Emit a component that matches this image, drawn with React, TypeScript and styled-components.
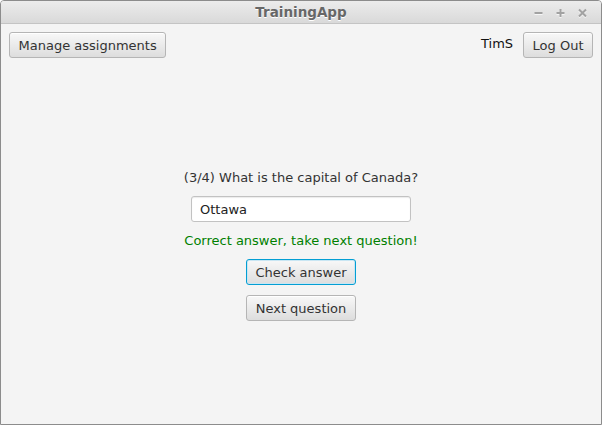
import React from "react";
import styled, { createGlobalStyle } from "styled-components";

const Global = createGlobalStyle`
  html, body { margin: 0; padding: 0; background: #ffffff; }
  body { font-family: "DejaVu Sans", "Liberation Sans", sans-serif; }
  * { box-sizing: border-box; }
`;

const Window = styled.div`
  width: 602px;
  height: 425px;
  border: 1px solid #8c8c8c;
  border-radius: 4px 4px 0 0;
  display: flex;
  flex-direction: column;
  background: #f4f4f4;
  overflow: hidden;
`;

const TitleBar = styled.div`
  height: 23px;
  flex: none;
  position: relative;
  display: flex;
  align-items: center;
  justify-content: center;
  background: linear-gradient(#ececec, #d9d9d9);
  border-bottom: 1px solid #c4c4c4;
`;

const Title = styled.div`
  font-size: 13.5px;
  font-weight: bold;
  color: #676767;
  text-shadow: 0 1px 0 #ffffff;
`;

const Controls = styled.div`
  position: absolute;
  right: 14px;
  top: 0;
  height: 100%;
  display: flex;
  align-items: center;
  gap: 13px;
`;

const Ctl = styled.svg`
  width: 9px;
  height: 10px;
  display: block;
  margin-top: 2px;
`;

const Content = styled.div`
  flex: 1;
  display: flex;
  flex-direction: column;
`;

const TopBar = styled.div`
  display: flex;
  align-items: center;
  padding: 8px;
  gap: 10px;
`;

const Spacer = styled.div`
  flex: 1;
`;

const UserName = styled.span`
  font-size: 13px;
  color: #111;
  margin-top: -3px;
`;

const Button = styled.button<{ $focused?: boolean }>`
  font-family: "DejaVu Sans", "Liberation Sans", sans-serif;
  font-size: 13px;
  color: #333333;
  height: 26px;
  padding: 0 8.5px;
  border-radius: 3px;
  background: linear-gradient(#f8f8f8, #dddddd);
  border: 1px solid ${(p) => (p.$focused ? "#039ed3" : "#b5b5b5")};
  box-shadow: ${(p) =>
    p.$focused ? "inset 0 0 0 1px #c9e6f3" : "inset 0 1px 0 #ffffff"};
  cursor: default;
  white-space: nowrap;
`;

const Center = styled.div`
  flex: 1;
  display: flex;
  flex-direction: column;
  align-items: center;
  justify-content: center;
  gap: 10px;
`;

const Label = styled.div<{ $tone?: "ok" }>`
  font-size: 13px;
  line-height: 17px;
  color: ${(p) => (p.$tone === "ok" ? "#008000" : "#333333")};
`;

const Field = styled.input`
  width: 220px;
  height: 26px;
  font-family: "DejaVu Sans", "Liberation Sans", sans-serif;
  font-size: 13px;
  color: #222;
  padding: 0 8px;
  border: 1px solid #c2c2c2;
  border-radius: 3px;
  background: #ffffff;
  box-shadow: inset 0 1px 1px #ececec;
  outline: none;
`;

const stroke = { stroke: "#a2a2a2", strokeWidth: 2, fill: "none" } as const;
const shadow = { stroke: "#f6f6f6", strokeWidth: 2, fill: "none" } as const;

export default function App() {
  return (
    <>
      <Global />
      <Window>
        <TitleBar>
          <Title>TrainingApp</Title>
          <Controls>
            <Ctl viewBox="0 0 9 10">
              <path d="M0.5 6 H8.5" {...shadow} />
              <path d="M0.5 5 H8.5" {...stroke} />
            </Ctl>
            <Ctl viewBox="0 0 9 10">
              <path d="M0.5 5 H8.5 M4.5 1 V9" {...shadow} transform="translate(0,1)" />
              <path d="M0.5 5 H8.5 M4.5 1 V9" {...stroke} />
            </Ctl>
            <Ctl viewBox="0 0 9 10">
              <path d="M1 1.5 L8 8.5 M8 1.5 L1 8.5" {...shadow} transform="translate(0,1)" />
              <path d="M1 1.5 L8 8.5 M8 1.5 L1 8.5" {...stroke} />
            </Ctl>
          </Controls>
        </TitleBar>
        <Content>
          <TopBar>
            <Button>Manage assignments</Button>
            <Spacer />
            <UserName>TimS</UserName>
            <Button>Log Out</Button>
          </TopBar>
          <Center>
            <Label>(3/4) What is the capital of Canada?</Label>
            <Field defaultValue="Ottawa" readOnly />
            <Label $tone="ok">Correct answer, take next question!</Label>
            <Button $focused>Check answer</Button>
            <Button>Next question</Button>
          </Center>
        </Content>
      </Window>
    </>
  );
}
